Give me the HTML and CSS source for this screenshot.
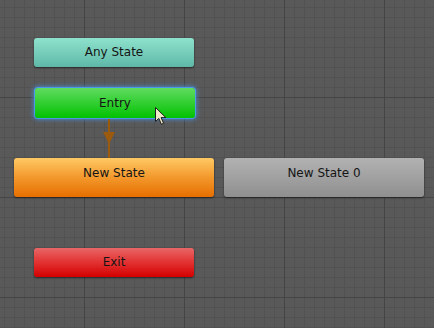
FILE: index.html
```html
<!DOCTYPE html>
<html lang="en">
<head>
    <meta charset="UTF-8">
    <title>Animator</title>
    <link rel="stylesheet" href="styles.css">
</head>
<body>

<div class="graph">
    <!-- state nodes sit on the free canvas -->
    <div class="node any" style="left:34px; top:38px;">Any State</div>
    <div class="node entry" style="left:35px; top:88px;">Entry</div>
    <div class="node state orange" style="left:14px; top:158px;">New State</div>
    <div class="node state gray" style="left:224px; top:158px;">New State 0</div>
    <div class="node exit" style="left:34px; top:248px;">Exit</div>

    <!-- transition Entry -> New State -->
    <div class="transition" style="left:108px; top:119px; height:39px;"></div>
    <div class="arrow-head" style="left:103px; top:132px;"></div>

    <svg class="cursor" style="left:154px; top:106px;" width="14" height="20" viewBox="0 0 14 20">
        <path d="M1.5 1.5 L1.5 15.5 L4.8 12.4 L7.4 18.3 L9.6 17.3 L7.1 11.6 L11.8 11.6 Z"
              fill="#efe9c6" stroke="#1e1e1e" stroke-width="1" stroke-linejoin="miter"/>
    </svg>
</div>

</body>
</html>
```

FILE: styles.css
```css
* {
    margin: 0;
    padding: 0;
    box-sizing: border-box;
}
body {
    width: 434px;
    height: 328px;
    overflow: hidden;
    background: #595959;
    font-family: "DejaVu Sans", Verdana, sans-serif;
}
.graph {
    position: relative;
    width: 434px;
    height: 328px;
    background-color: #595959;
    background-image:
        linear-gradient(90deg, #454545 1px, transparent 1px),
        linear-gradient(#454545 1px, transparent 1px),
        linear-gradient(90deg, #525252 1px, transparent 1px),
        linear-gradient(#525252 1px, transparent 1px);
    background-size: 100px 100px, 100px 100px, 10px 10px, 10px 10px;
    background-position: 84px 0, 0 97px, 4px 0, 0 7px;
}
.node {
    position: absolute;
    width: 160px;
    height: 29px;
    border-radius: 3px;
    font-size: 12px;
    line-height: 29px;
    text-align: center;
    color: #151515;
    box-shadow: 0 1px 2px rgba(0, 0, 0, 0.55);
}
.any {
    background: linear-gradient(#8ee2cd, #5fb8a7);
}
.entry {
    height: 30px;
    line-height: 30px;
    background: linear-gradient(#60dc60, #02c102);
    box-shadow: 0 0 0 1px #4a98e8, 0 0 4px 2px rgba(70, 150, 235, 0.65);
}
.exit {
    background: linear-gradient(#e96767, #e33636 45%, #d40000);
}
.state {
    width: 200px;
    height: 39px;
    line-height: 30px;
}
.orange {
    background: linear-gradient(#ffc964, #f3982c 50%, #e66f00);
}
.gray {
    background: linear-gradient(#b2b2b2, #8f8f8f);
}
.transition {
    position: absolute;
    width: 2px;
    background: #9b5a0e;
}
.arrow-head {
    position: absolute;
    width: 0;
    height: 0;
    border-left: 6px solid transparent;
    border-right: 6px solid transparent;
    border-top: 12px solid #9b5a0e;
}
.cursor {
    position: absolute;
}
```
